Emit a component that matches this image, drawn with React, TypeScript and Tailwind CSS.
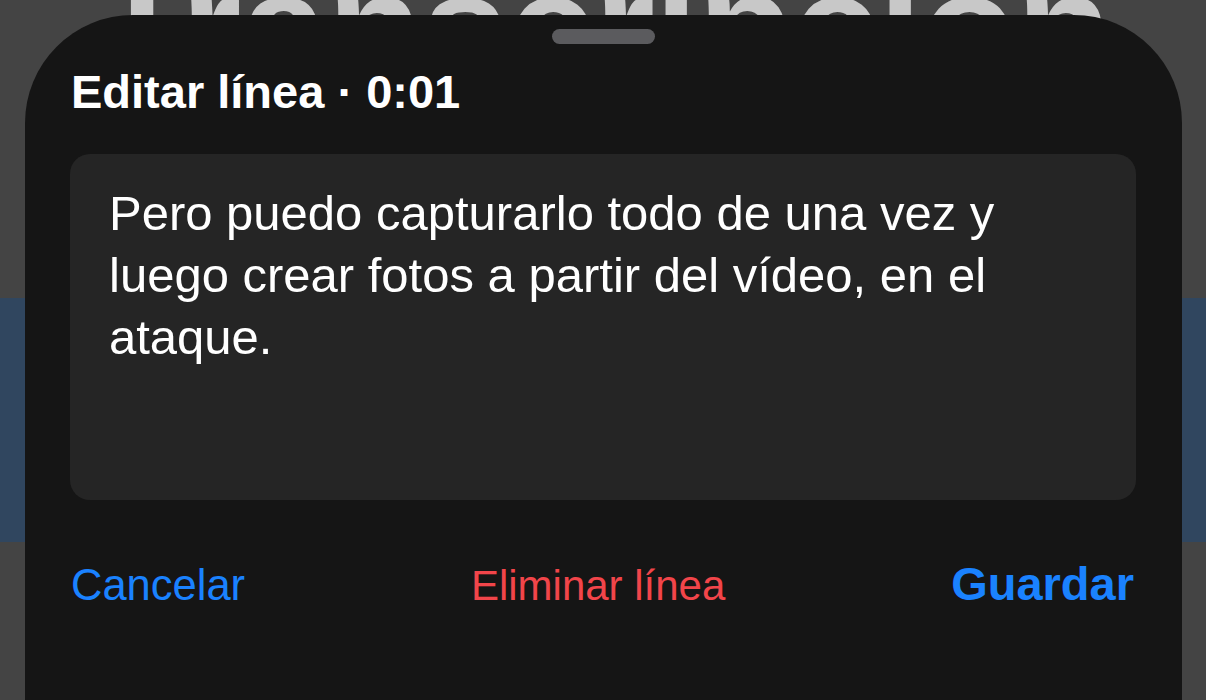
export default function App() {
  return (
    <div
      className="relative w-[1206px] h-[700px] overflow-hidden bg-[#444444]"
      style={{ fontFamily: '"Liberation Sans", Arial, sans-serif' }}
    >
      {/* page behind the sheet */}
      <div className="flex flex-col h-full">
        <div className="h-[298px] overflow-hidden">
          <p className="-mt-[50px] text-center text-[155px] leading-[155px] font-bold text-[#c8c8c8] whitespace-nowrap">
            Transcripción
          </p>
        </div>
        <div className="h-[244px] bg-[#30465f]" />
      </div>

      {/* edit sheet */}
      <div className="absolute left-[25px] right-[24px] top-[15px] bottom-0 bg-[#151515] rounded-t-[108px] px-[46px]">
        <div className="flex justify-center pt-[14px]">
          <div className="w-[103px] h-[15px] rounded-full bg-[#5b5b5e]" />
        </div>

        <h1 className="mt-[20px] text-[47px] leading-[56px] font-bold text-white">
          Editar línea · 0:01
        </h1>

        <div className="mt-[34px] -ml-[1px] w-[1066px] h-[346px] rounded-[20px] bg-[#252525] px-[39px] pt-[28px]">
          <p className="text-[49px] leading-[62px] text-white">
            Pero puedo capturarlo todo de una vez y luego crear fotos a partir del vídeo, en el ataque.
          </p>
        </div>

        <div className="mt-[58px] flex items-baseline justify-between pr-[2px]">
          <button className="text-[43.5px] leading-[52px] text-[#1a82ff]">Cancelar</button>
          <button className="text-[42px] leading-[52px] text-[#f2454a]">Eliminar línea</button>
          <button className="text-[47px] leading-[52px] font-bold text-[#1a82ff]">Guardar</button>
        </div>
      </div>
    </div>
  );
}
